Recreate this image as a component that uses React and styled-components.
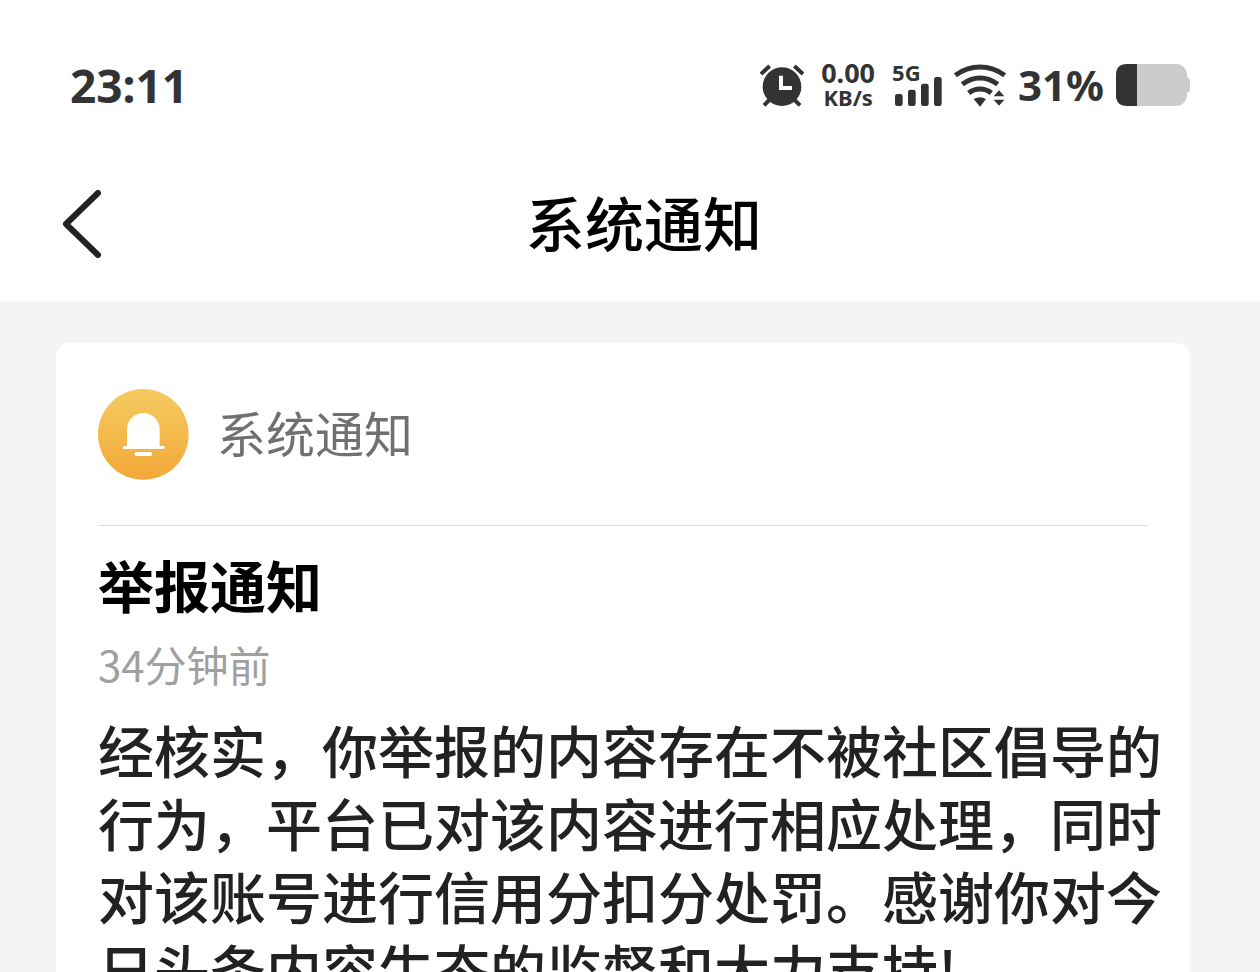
import React from 'react'
import styled, { createGlobalStyle } from 'styled-components'

const GlobalStyle = createGlobalStyle`
* {
    box-sizing: border-box;
}
body {
    margin: 0;
    background: #f3f4f6;
    font-family: "Noto Sans CJK SC", sans-serif;
}
`

const Page = styled.div`
height: 100vh;
overflow: hidden;
background: #f3f4f6;
`

const StatusBar = styled.div`
display: flex;
justify-content: space-between;
align-items: center;
padding: 50px 70px 27px;
background: #fff;
color: #333;
font-family: "Noto Sans", sans-serif;
font-weight: 700;
`

const Clock = styled.time`
font-size: 46px;
line-height: 70px;
`

const StatusIcons = styled.div`
display: flex;
align-items: center;
gap: 12px;
svg{
    display: block;
}
`

const Speed = styled.div`
display: flex;
flex-direction: column;
align-items: center;
padding: 0 5px;
font-size: 27px;
line-height: 24px;
`

const SpeedUnit = styled.span`
font-size: 22px;
`

const Signal = styled.div`
display: grid;
width: 50px;
height: 42px;
svg{
    grid-area: 1 / 1;
    place-self: end;
}
`

const Network = styled.span`
grid-area: 1 / 1;
font-size: 22px;
line-height: 16px;
`

const Percent = styled.span`
font-size: 42px;
line-height: 70px;
`

const NavBar = styled.header`
display: grid;
grid-template-columns: 1fr auto 1fr;
align-items: center;
height: 154px;
padding: 0 28px 0 56px;
background: #fff;
`

const BackButton = styled.button`
justify-self: start;
padding: 0;
border: none;
background: none;
cursor: pointer;
svg{
    display: block;
}
`

const NavTitle = styled.h1`
margin: 0;
padding-bottom: 4px;
color: #000;
font-size: 59px;
font-weight: 500;
line-height: 84px;
`

const Card = styled.article`
margin: 42px 70px 0 56px;
border-radius: 14px;
background: #fff;
`

const Sender = styled.div`
display: flex;
align-items: center;
gap: 28px;
height: 183px;
margin: 0 42px;
border-bottom: 1px solid #dedede;
`

const SenderName = styled.span`
padding-bottom: 4px;
color: #707070;
font-size: 49px;
line-height: 70px;
`

const Content = styled.div`
padding: 18px 24px 42px 42px;
`

const Heading = styled.h2`
margin: 0;
color: #000;
font-size: 56px;
font-weight: 700;
line-height: 80px;
`

const Ago = styled.p`
margin: 10px 0 18px;
color: #a0a0a0;
font-size: 42px;
line-height: 60px;
`

const Message = styled.p`
margin: 0;
color: #222;
font-size: 56px;
font-weight: 500;
line-height: 73px;
`

const bars = [
  { x: 467, y: 132 },
  { x: 506, y: 119 },
  { x: 545, y: 101 },
  { x: 584, y: 81 },
]

const AlarmIcon = () => (
  <svg width="44" height="43" viewBox="57 40 132 129" fill="none" stroke="#333" strokeWidth="12">
    <circle cx="123" cy="108" r="58" fill="#333" stroke="none" />
    <path d="M60 70 86 46M160 46l26 24" />
    <path d="M69 164l16-16M177 164l-16-16" />
    <path d="M120 75v37h33" stroke="#fff" strokeWidth="12" />
  </svg>
)

const BarsIcon = () => (
  <svg width="47" height="29" viewBox="467 81 141 87" fill="#333">
    {bars.map((b) => (
      <rect key={b.x} x={b.x} y={b.y} width="23" height={168 - b.y} rx="7" />
    ))}
  </svg>
)

const WifiIcon = () => (
  <svg width="52" height="43" viewBox="47 40 156 129" fill="none" stroke="#333" strokeWidth="15">
    <path d="M51 74Q84 49 125 49T199 74" />
    <path d="M72 101Q96 82 125 82T178 101" />
    <path d="M91 127Q106 115 125 115T159 127" />
    <path d="M106 145Q125 134 143 145L125 168ZM182 119 166 137h32ZM166 147h32l-16 18Z" fill="#333" stroke="none" />
  </svg>
)

const BatteryIcon = () => (
  <svg width="74" height="42" viewBox="0 0 74 42">
    <rect width="71" height="42" rx="11" fill="#ccc" />
    <path d="M71 13q3 1 3 4v8q0 3-3 4Z" fill="#ccc" />
    <path d="M21 0H11Q0 0 0 11v20q0 11 11 11h10Z" fill="#333" />
  </svg>
)

const BackIcon = () => (
  <svg width="56" height="84" viewBox="0 0 56 84" fill="none" stroke="#222" strokeWidth="6" strokeLinecap="round" strokeLinejoin="round">
    <path d="M42 11 10 42l32 31" />
  </svg>
)

const BellIcon = () => (
  <svg width="91" height="91" viewBox="0 0 273 273" fill="#fff">
    <defs>
      <linearGradient id="gold" x1="0" y1="0" x2="0" y2="1">
        <stop offset="0" stopColor="#f5cb62" />
        <stop offset="1" stopColor="#f3a837" />
      </linearGradient>
    </defs>
    <circle cx="136" cy="136" r="136" fill="url(#gold)" />
    <path d="M87 174V121a49 49 0 0 1 98 0v53Z" />
    <rect x="74" y="171" width="126" height="9" rx="4" />
    <rect x="110" y="189" width="52" height="12" rx="5" />
  </svg>
)

const App = () => {
  return (
    <Page>
      <GlobalStyle />
      <StatusBar>
        <Clock>23:11</Clock>
        <StatusIcons>
          <AlarmIcon />
          <Speed>
            0.00
            <SpeedUnit>KB/s</SpeedUnit>
          </Speed>
          <Signal>
            <Network>5G</Network>
            <BarsIcon />
          </Signal>
          <WifiIcon />
          <Percent>31%</Percent>
          <BatteryIcon />
        </StatusIcons>
      </StatusBar>
      <NavBar>
        <BackButton aria-label="返回"><BackIcon /></BackButton>
        <NavTitle>系统通知</NavTitle>
      </NavBar>
      <Card>
        <Sender>
          <BellIcon />
          <SenderName>系统通知</SenderName>
        </Sender>
        <Content>
          <Heading>举报通知</Heading>
          <Ago>34分钟前</Ago>
          <Message>
            经核实，你举报的内容存在不被社区倡导的行为，平台已对该内容进行相应处理，同时对该账号进行信用分扣分处罚。感谢你对今日头条内容生态的监督和大力支持!
          </Message>
        </Content>
      </Card>
    </Page>
  )
}

export default App
